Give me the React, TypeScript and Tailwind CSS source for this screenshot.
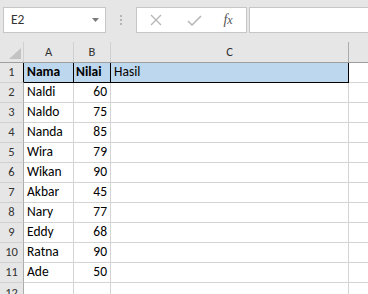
import React from "react";

const data: [string, number][] = [
  ["Naldi", 60],
  ["Naldo", 75],
  ["Nanda", 85],
  ["Wira", 79],
  ["Wikan", 90],
  ["Akbar", 45],
  ["Nary", 77],
  ["Eddy", 68],
  ["Ratna", 90],
  ["Ade", 50],
];

const cellFont = { fontFamily: '"Carlito", "Lato", "Liberation Sans", sans-serif' };

export default function App() {
  return (
    <div
      className="w-[368px] h-[294px] overflow-hidden bg-[#e6e6e6] text-black"
      style={cellFont}
    >
      {/* Top bar */}
      <div className="h-[42px] flex items-start pt-[7px] pl-[3px]">
        <div className="w-[103px] h-[26px] bg-white border border-[#c6c6c6] flex items-center justify-between pl-[7px] pr-[6px]">
          <span className="text-[13.5px] text-[#333] leading-none">E2</span>
          <svg width="7" height="4" viewBox="0 0 7 4">
            <path d="M0 0 L7 0 L3.5 4 Z" fill="#7a7a7a" />
          </svg>
        </div>
        <div className="w-[30px] h-[26px] flex flex-col items-center justify-center gap-[2px]">
          <div className="w-[2px] h-[2px] bg-[#b5b5b5]" />
          <div className="w-[2px] h-[2px] bg-[#b5b5b5]" />
          <div className="w-[2px] h-[2px] bg-[#b5b5b5]" />
        </div>
        <div className="w-[111px] h-[26px] bg-white border border-[#c6c6c6] flex items-center">
          <div className="w-[38px] flex justify-center">
            <svg width="12" height="12" viewBox="0 0 12 12">
              <path d="M1 1 L11 11 M11 1 L1 11" stroke="#b5b5b5" strokeWidth="1.3" fill="none" />
            </svg>
          </div>
          <div className="w-[38px] flex justify-center">
            <svg width="15" height="11" viewBox="0 0 15 11">
              <path d="M1 6 L5 10 L14 1" stroke="#b5b5b5" strokeWidth="1.5" fill="none" />
            </svg>
          </div>
          <div className="w-[30px] flex justify-center">
            <span
              className="italic text-[14px] text-[#555] leading-none"
              style={{ fontFamily: '"Liberation Serif", serif' }}
            >
              f<span className="text-[12px]">x</span>
            </span>
          </div>
        </div>
        <div className="ml-[2px] flex-1 h-[26px] bg-white border border-[#c6c6c6] border-r-0" />
      </div>

      {/* Column header */}
      <div className="flex h-[21px] border-b border-[#9e9e9e] text-[12.5px] text-[#333]">
        <div className="w-[24px] border-r border-[#d0d0d0] relative">
          <svg className="absolute left-[9px] top-[6px]" width="12" height="11" viewBox="0 0 12 11">
            <path d="M12 0 L12 11 L0 11 Z" fill="#c3c3c3" />
          </svg>
        </div>
        <div className="w-[50px] border-r border-[#d0d0d0] flex items-center justify-center">A</div>
        <div className="w-[37px] border-r border-[#d0d0d0] flex items-center justify-center">B</div>
        <div className="w-[238px] border-r border-[#ababab] flex items-center justify-center">C</div>
        <div className="flex-1" />
      </div>

      {/* Row 1 */}
      <div className="flex h-[20px] bg-white">
        <div className="w-[24px] bg-[#e6e6e6] border-r border-b border-r-black border-b-[#d0d0d0] flex items-center justify-center text-[12.5px] text-[#333]">
          1
        </div>
        <div className="w-[50px] bg-[#bdd7ee] border-r border-b border-black flex items-center pl-[3px] text-[13.5px] font-bold">
          Nama
        </div>
        <div className="w-[37px] bg-[#bdd7ee] border-r border-b border-black flex items-center pl-[2px] text-[13.5px] font-bold">
          Nilai
        </div>
        <div className="w-[238px] bg-[#bdd7ee] border-r border-b border-black flex items-center pl-[3px] text-[13.5px]">
          Hasil
        </div>
        <div className="flex-1 border-b border-[#d4d4d4]" />
      </div>

      {data.map(([name, val], i) => (
        <div key={name} className="flex h-[20px] bg-white">
          <div className="w-[24px] bg-[#e6e6e6] border-r border-b border-r-[#ababab] border-b-[#d0d0d0] flex items-center justify-center text-[12.5px] text-[#333]">
            {i + 2}
          </div>
          <div className="w-[50px] border-r border-b border-[#d4d4d4] flex items-center pl-[3px] text-[13.5px]">
            {name}
          </div>
          <div className="w-[37px] border-r border-b border-[#d4d4d4] flex items-center justify-end pr-[3px] text-[13.5px]">
            {val}
          </div>
          <div className="w-[238px] border-r border-b border-[#d4d4d4]" />
          <div className="flex-1 border-b border-[#d4d4d4]" />
        </div>
      ))}

      <div className="flex h-[20px] bg-white">
        <div className="w-[24px] bg-[#e6e6e6] border-r border-r-[#ababab] flex items-center justify-center text-[12.5px] text-[#333]">
          12
        </div>
        <div className="w-[50px] border-r border-[#d4d4d4]" />
        <div className="w-[37px] border-r border-[#d4d4d4]" />
        <div className="w-[238px] border-r border-[#d4d4d4]" />
        <div className="flex-1" />
      </div>
    </div>
  );
}
